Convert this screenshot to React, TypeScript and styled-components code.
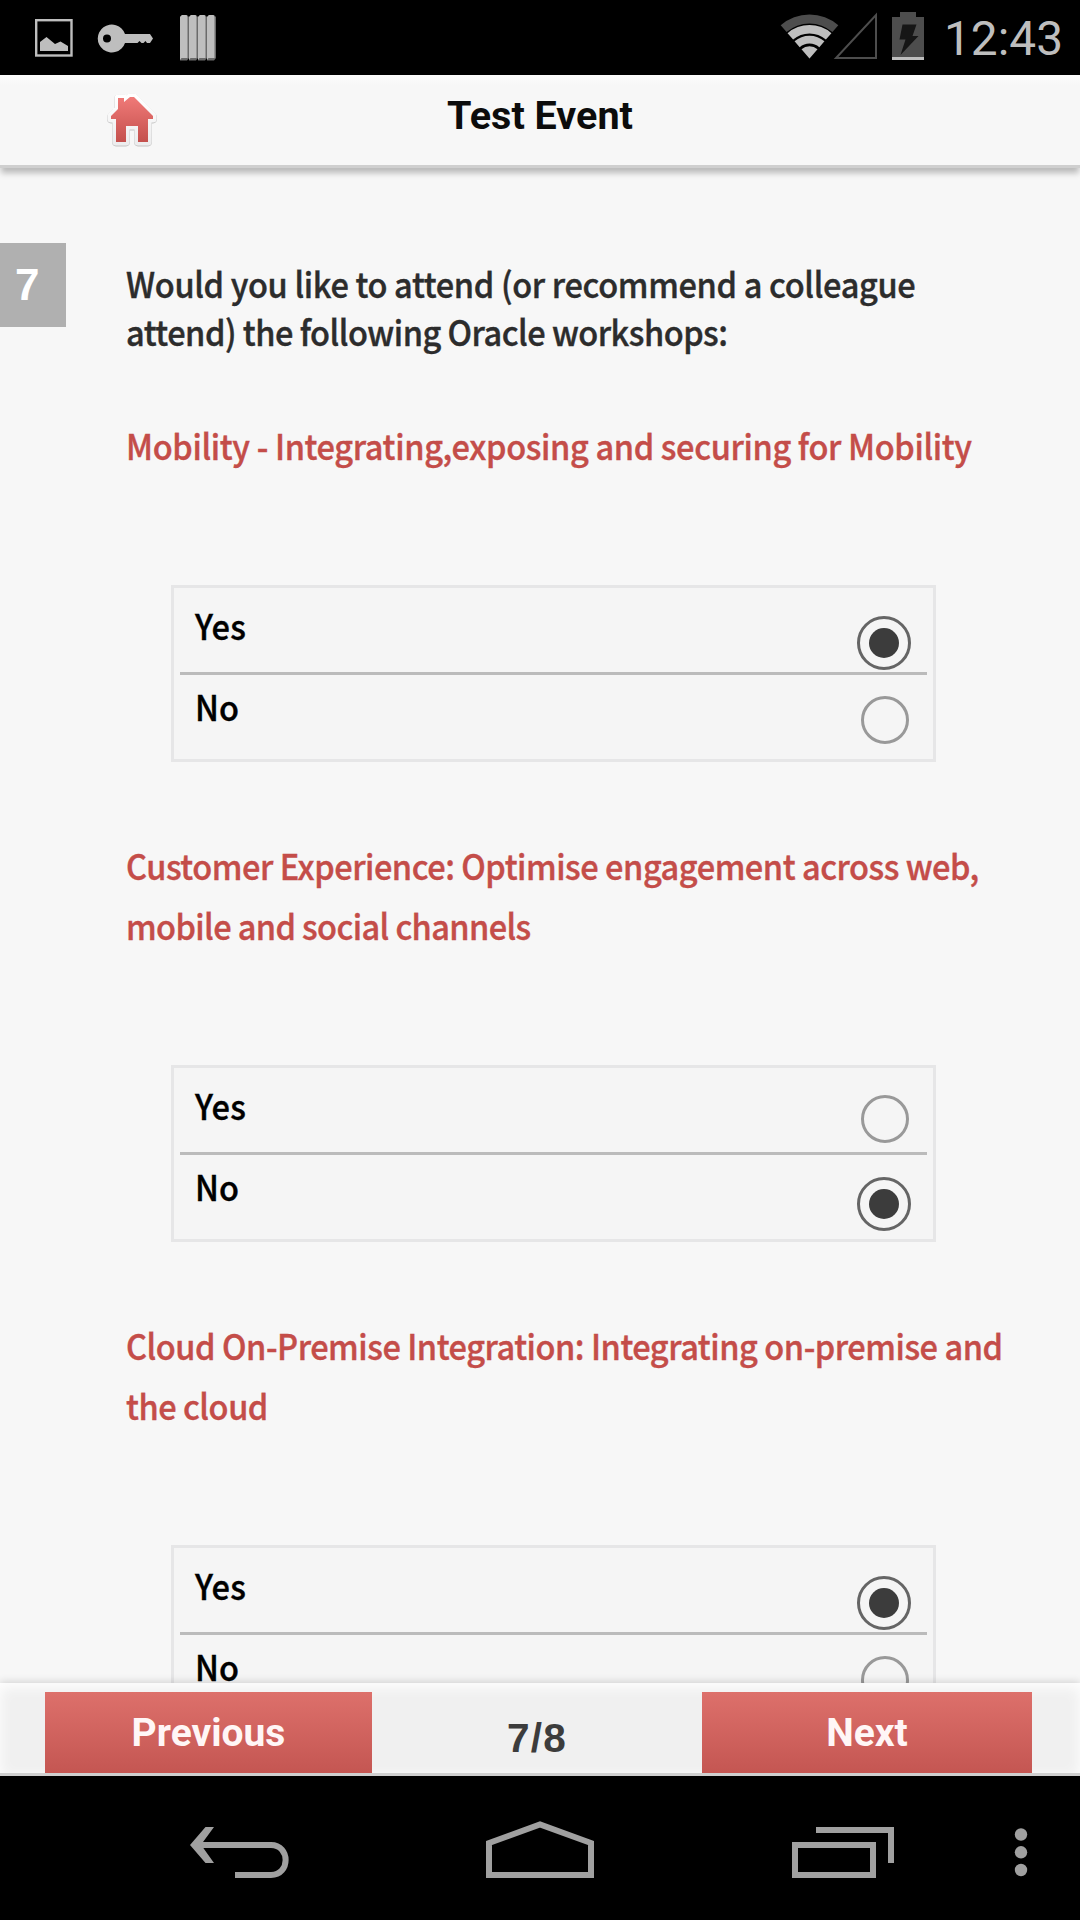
import React from "react";
import styled, { createGlobalStyle } from "styled-components";

const Global = createGlobalStyle`
  *, *::before, *::after { box-sizing: border-box; }
  html, body { margin: 0; padding: 0; background: #000; }
`;

const humanist = `"Noto Sans CJK SC", "Noto Sans", sans-serif`;

const Screen = styled.div`
  width: 1080px;
  height: 1920px;
  display: flex;
  flex-direction: column;
  overflow: hidden;
  background: #f7f7f7;
  font-family: Roboto, sans-serif;
`;

const StatusBar = styled.header`
  height: 75px;
  flex: none;
  display: flex;
  justify-content: space-between;
  background: #000;
`;

const StatusGroup = styled.div`
  display: flex;
`;

const Clock = styled.time`
  width: 136px;
  line-height: 78px;
  font-size: 47.8px;
  color: #bebebe;
  white-space: nowrap;
`;

const TitleBar = styled.div`
  height: 93px;
  flex: none;
  display: grid;
  grid-template-columns: 180px 1fr 180px;
  border-bottom: 3px solid #cfcfcf;
  background: linear-gradient(#fcfcfc, #f7f7f7 10px);
  box-shadow: 0 6px 6px -1px rgba(0, 0, 0, 0.25);
  z-index: 1;
`;

const HomeButton = styled.button`
  align-self: start;
  border: 0;
  padding: 17px 0 0 105px;
  background: none;
  text-align: left;
  line-height: 0;
`;

const Title = styled.h1`
  margin: 0;
  text-align: center;
  font-size: 39.5px;
  line-height: 81px;
  font-weight: 700;
  color: #0c0c0c;
`;

const Survey = styled.main`
  flex: 1;
  min-height: 0;
  overflow: hidden;
  display: grid;
  grid-template-columns: 126px 1fr;
  padding-top: 75px;
`;

const QuestionNumber = styled.div`
  width: 66px;
  height: 84px;
  padding-left: 15px;
  background: #b0b0b0;
  color: #fff;
  font: 700 44px/84px "Liberation Sans", sans-serif;
`;

const Content = styled.div`
  display: flex;
  flex-direction: column;
`;

const Line = styled.span<{ $track: number }>`
  display: block;
  width: max-content;
  white-space: nowrap;
  letter-spacing: ${(p) => p.$track}px;
  transform: scaleX(0.93);
  transform-origin: left;
  -webkit-text-stroke: 0.4px currentColor;
`;

const Question = styled.h2`
  margin: 16px 0 60px;
  height: 96px;
  font: 500 35px/48px ${humanist};
  color: #2c2c2c;
`;

const Topic = styled.section`
  display: flex;
  flex-direction: column;
  margin-bottom: 73px;
`;

const TopicTitle = styled.h3<{ $lines: number }>`
  margin: 0 0 110px;
  height: ${(p) => p.$lines * 60}px;
  font: 500 35px/60px ${humanist};
  color: #c44d49;
`;

const Options = styled.div`
  width: 765px;
  height: 177px;
  margin-left: 45px;
  padding: 0 6px;
  border: 3px solid #e6e6e7;
  background: #f5f5f5;
`;

const Option = styled.label`
  height: 84px;
  display: flex;
  justify-content: space-between;
  padding: 0 16px 0 15px;
  & + & {
    height: 87px;
    border-top: 3px solid #bbb;
  }
`;

const OptionText = styled.span<{ $second: boolean }>`
  font: 500 35px/60px ${humanist};
  padding-top: ${(p) => (p.$second ? 1 : 7)}px;
  color: #000;
`;

const RadioOn = styled.span<{ $top: number }>`
  width: 54px;
  height: 54px;
  margin: ${(p) => p.$top}px 0.5px 0 0;
  border: 3px solid #656565;
  border-radius: 50%;
  display: grid;
  place-items: center;
  &::after {
    content: "";
    width: 30px;
    height: 30px;
    border-radius: 50%;
    background: #3c3c3c;
  }
`;

const RadioOff = styled.span<{ $top: number }>`
  width: 48px;
  height: 48px;
  margin: ${(p) => p.$top}px 2px 0 0;
  border: 3px solid #999;
  border-radius: 50%;
`;

const Pager = styled.nav`
  height: 93px;
  flex: none;
  display: grid;
  grid-template-columns: 327px 330px 330px;
  padding: 9px 48px 0 45px;
  border-bottom: 3px solid #cfcfcf;
  background: #f0f0f0;
  box-shadow: 0 -1px 8px rgba(0, 0, 0, 0.16), inset 0 4px 14px #fff;
  z-index: 1;
`;

const PageButton = styled.button`
  border: 0;
  padding: 0;
  height: 81px;
  background: linear-gradient(#dd706b, #c45652);
  color: #fff6f6;
  font: 700 39px/80px Roboto, sans-serif;
`;

const PageCount = styled.span`
  text-align: center;
  color: #3c3c3c;
  font: 700 40.5px/92px "Liberation Sans", sans-serif;
  letter-spacing: 1.2px;
`;

const NavBar = styled.footer`
  height: 144px;
  flex: none;
  background: #000;
`;

type Heading = { text: string; track: number }[];

const question: Heading = [
  { text: "Would you like to attend (or recommend a colleague", track: -0.37 },
  { text: "attend) the following Oracle workshops:", track: -0.54 },
];

const topics: { title: Heading; answer: string }[] = [
  {
    title: [{ text: "Mobility - Integrating,exposing and securing for Mobility", track: -0.38 }],
    answer: "Yes",
  },
  {
    title: [
      { text: "Customer Experience: Optimise engagement across web,", track: -0.5 },
      { text: "mobile and social channels", track: -0.66 },
    ],
    answer: "No",
  },
  {
    title: [
      { text: "Cloud On-Premise Integration: Integrating on-premise and", track: -0.5 },
      { text: "the cloud", track: -0.5 },
    ],
    answer: "Yes",
  },
];

const StatusLeft = () => (
  <svg width="240" height="75" viewBox="0 0 240 75">
    <rect x="36.2" y="20.2" width="35.3" height="35.3" fill="none" stroke="#bebebe" strokeWidth="2.4" />
    <path d="M40 42 46.500 37 55 44 60.500 41.500 68 46V51H40Z" fill="#bebebe" />
    <path
      fillRule="evenodd"
      fill="#bebebe"
      d="M125 34H150L153 38.500 150 43H147L145.500 41 143.500 43H141.500L139.500 41 137.500 43H125A14 14 0 1 1 125 34ZM107 34.500a4 4 0 1 0 0 8a4 4 0 1 0 0-8Z"
    />
    {[180, 189, 198, 207].map((x) => (
      <g key={x}>
        <path d={`M${x} 17l2-2h5l2 2V58l-2 2.500H${x}Z`} fill="#6a6a6a" />
        <path d={`M${x} 17l2-2h4.500l1 2V58H${x + 1.5}L${x} 60Z`} fill="#bebebe" />
      </g>
    ))}
  </svg>
);

/* One band of the wifi fan, between two radii measured from its bottom tip. */
const band = (inner: number, outer: number) => {
  const at = (r: number, side: number) => `${809.5 + side * 0.655 * r} ${58.5 - 0.756 * r}`;
  return `M${at(outer, -1)}A${outer} ${outer} 0 0 1 ${at(outer, 1)}L${at(inner, 1)}A${inner} ${inner} 0 0 0 ${at(inner, -1)}Z`;
};

const StatusRight = () => (
  <svg width="166" height="75" viewBox="778 0 166 75">
    <path d={band(35, 44)} fill="#4d4d4d" />
    <path d={band(25, 33.5)} fill="#bebebe" />
    <path d={band(15, 22.8)} fill="#bebebe" />
    <path d={band(0.1, 12.2)} fill="#bebebe" />
    <path d="M836 58H876V15Z" fill="none" stroke="#4d4d4d" strokeWidth="2" />
    <path d="M892 17H900V12H916V17H924V57H892Z" fill="#4d4d4d" />
    <path d="M902.500 24.500H916.500L912.500 36H918.500L900.500 55 905.500 39.500H899.500Z" fill="#161616" />
    <path d="M892 57H924V60H892Z" fill="#bebebe" />
  </svg>
);

const HomeIcon = () => {
  const house =
    "M118 98H124V102L130 97H134L153 116V119H148V142H138V126H126V142H116V119H111V116L118 109Z";
  return (
    <svg width="54" height="56" viewBox="105 92 54 56">
      <defs>
        <linearGradient id="roof" x1="0" y1="0" x2="0" y2="1">
          <stop offset="0" stopColor="#f07a78" />
          <stop offset="1" stopColor="#c4504d" />
        </linearGradient>
        <linearGradient id="rim" x1="0" y1="0" x2="0" y2="1">
          <stop offset="0" stopColor="#fff" />
          <stop offset="1" stopColor="#ededee" />
        </linearGradient>
      </defs>
      <path d={house} transform="translate(0 .6)" stroke="#c4c4c4" strokeWidth="7.6" strokeLinejoin="round" />
      <path d={house} stroke="url(#rim)" strokeWidth="7" strokeLinejoin="round" />
      <path d={house} fill="url(#roof)" />
    </svg>
  );
};

const NavIcons = () => (
  <svg width="1080" height="144" viewBox="0 1776 1080 144" fill="none" stroke="#a0a0a0" strokeWidth="6">
    <path d="M200 1845H271C290.500 1845 290.500 1875 271 1875H235" />
    <path d="M205.500 1827H214L201 1844.700 214 1863H205.500L190 1845Z" fill="#a0a0a0" stroke="none" />
    <path d="M489 1875V1843L540 1824.500 591 1843V1875Z" />
    <path d="M795 1845H873V1875H795Z" />
    <path d="M816 1830H891V1863" />
    <g fill="#a0a0a0" stroke="none">
      <circle cx="1021" cy="1834.500" r="6.200" />
      <circle cx="1021" cy="1852.300" r="6.200" />
      <circle cx="1021" cy="1870" r="6.200" />
    </g>
  </svg>
);

const Lines = ({ lines }: { lines: Heading }) => (
  <>
    {lines.map((l) => (
      <Line key={l.text} $track={l.track}>
        {l.text}
      </Line>
    ))}
  </>
);

const Choice = ({ label, second, on }: { label: string; second: boolean; on: boolean }) => (
  <Option>
    <OptionText $second={second}>
      <Line $track={0.2}>{label}</Line>
    </OptionText>
    {on ? <RadioOn $top={second ? 22 : 28} /> : <RadioOff $top={second ? 21 : 27} />}
  </Option>
);

export default function App() {
  return (
    <>
      <Global />
      <Screen>
        <StatusBar>
          <StatusLeft />
          <StatusGroup>
            <StatusRight />
            <Clock>12:43</Clock>
          </StatusGroup>
        </StatusBar>
        <TitleBar>
          <HomeButton aria-label="Home">
            <HomeIcon />
          </HomeButton>
          <Title>Test Event</Title>
        </TitleBar>
        <Survey>
          <QuestionNumber>7</QuestionNumber>
          <Content>
            <Question>
              <Lines lines={question} />
            </Question>
            {topics.map((t) => (
              <Topic key={t.title[0].text}>
                <TopicTitle $lines={t.title.length}>
                  <Lines lines={t.title} />
                </TopicTitle>
                <Options>
                  <Choice label="Yes" second={false} on={t.answer === "Yes"} />
                  <Choice label="No" second on={t.answer === "No"} />
                </Options>
              </Topic>
            ))}
          </Content>
        </Survey>
        <Pager>
          <PageButton>Previous</PageButton>
          <PageCount>7/8</PageCount>
          <PageButton>Next</PageButton>
        </Pager>
        <NavBar>
          <NavIcons />
        </NavBar>
      </Screen>
    </>
  );
}
